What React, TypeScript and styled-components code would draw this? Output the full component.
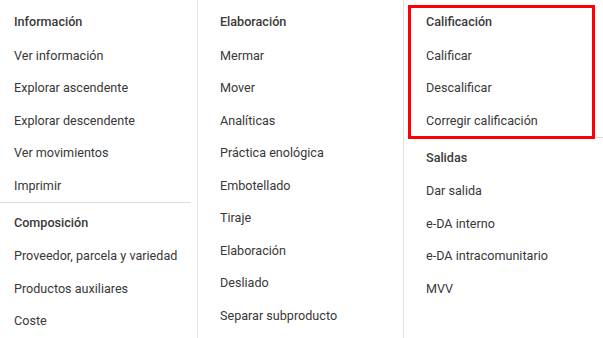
import React from "react";
import styled, { createGlobalStyle } from "styled-components";

const GlobalStyle = createGlobalStyle`
  html, body {
    margin: 0;
    padding: 0;
    background: #ffffff;
    overflow: hidden;
  }
  body {
    font-family: Roboto, "Liberation Sans", Arial, sans-serif;
  }
`;

type Section = {
  title: string;
  items: string[];
  highlight?: boolean;
};

const columns: Section[][] = [
  [
    {
      title: "Información",
      items: [
        "Ver información",
        "Explorar ascendente",
        "Explorar descendente",
        "Ver movimientos",
        "Imprimir",
      ],
    },
    {
      title: "Composición",
      items: ["Proveedor, parcela y variedad", "Productos auxiliares", "Coste"],
    },
  ],
  [
    {
      title: "Elaboración",
      items: [
        "Mermar",
        "Mover",
        "Analíticas",
        "Práctica enológica",
        "Embotellado",
        "Tiraje",
        "Elaboración",
        "Desliado",
        "Separar subproducto",
      ],
    },
  ],
  [
    {
      title: "Calificación",
      items: ["Calificar", "Descalificar", "Corregir calificación"],
      highlight: true,
    },
    {
      title: "Salidas",
      items: ["Dar salida", "e-DA interno", "e-DA intracomunitario", "MVV"],
    },
  ],
];

export default function App() {
  return (
    <>
      <GlobalStyle />
      <Menu>
        {columns.map((sections, ci) => (
          <Column key={ci}>
            {sections.map((s) => (
              <Group key={s.title}>
                <Header>{s.title}</Header>
                {s.items.map((item) => (
                  <Item key={item}>{item}</Item>
                ))}
              </Group>
            ))}
            {sections.some((s) => s.highlight) && <Highlight />}
          </Column>
        ))}
      </Menu>
    </>
  );
}

const Menu = styled.div`
  display: flex;
  margin-left: -8px;
  height: 338px;
  background: #fff;
`;

const Column = styled.div`
  position: relative;
  width: 206px;
  flex: 0 0 206px;
  box-sizing: border-box;
  padding: 0 6px 0 8px;
  border-right: 1px solid #e0e0e0;
  display: flex;
  flex-direction: column;
`;

const Group = styled.div`
  padding-top: 4px;
  & + & {
    border-top: 1px solid #dcdcdc;
    padding-top: 2px;
  }
`;

const Header = styled.div`
  height: 35px;
  display: flex;
  align-items: center;
  padding-left: 14px;
  font-size: 12.6px;
  font-weight: 500;
  color: #3a3a3a;
  white-space: nowrap;
`;

const Item = styled.div`
  height: 32.5px;
  display: flex;
  align-items: center;
  padding-left: 14px;
  font-size: 12.6px;
  font-weight: 400;
  color: #383838;
  white-space: nowrap;
  cursor: pointer;
`;

const Highlight = styled.div`
  position: absolute;
  left: 4px;
  top: 5px;
  width: 187px;
  height: 134px;
  box-sizing: border-box;
  border: 3px solid #ff0000;
  pointer-events: none;
`;
